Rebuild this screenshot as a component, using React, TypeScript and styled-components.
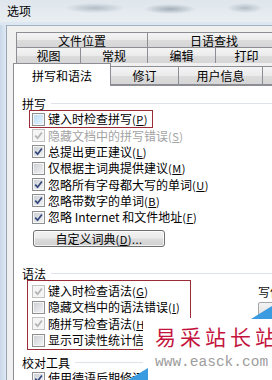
import styled, { createGlobalStyle } from 'styled-components'

const FONT = `"Noto Sans CJK SC", "Microsoft YaHei", sans-serif`

const GlobalStyle = createGlobalStyle`
  html, body {
    margin: 0;
    padding: 0;
  }
  body {
    width: 272px;
    height: 380px;
    overflow: hidden;
    background: #f0f0f0;
    font-family: ${FONT};
  }
`

type TabDef = { label: string; w: number; active?: boolean }

const backRows: TabDef[][] = [
  [
    { label: '文件位置', w: 132 },
    { label: '日语查找', w: 134 },
  ],
  [
    { label: '视图', w: 65 },
    { label: '常规', w: 68 },
    { label: '编辑', w: 69 },
    { label: '打印', w: 63 },
  ],
]

const frontRow: TabDef[] = [
  { label: '拼写和语法', w: 98, active: true },
  { label: '修订', w: 69 },
  { label: '用户信息', w: 85 },
  { label: '', w: 60 },
]

type Tone = 'normal' | 'hover' | 'disabled' | 'dim'

type Item = { text: string; key?: string; checked?: boolean; tone?: Tone; mark?: boolean }

const spelling: Item[] = [
  { text: '键入时检查拼写', key: 'P', tone: 'hover', mark: true },
  { text: '隐藏文档中的拼写错误', key: 'S', checked: true, tone: 'disabled' },
  { text: '总提出更正建议', key: 'L', checked: true },
  { text: '仅根据主词典提供建议', key: 'M' },
  { text: '忽略所有字母都大写的单词', key: 'U', checked: true },
  { text: '忽略带数字的单词', key: 'B', checked: true },
  { text: '忽略 Internet 和文件地址', key: 'F', checked: true },
]

const grammar: Item[] = [
  { text: '键入时检查语法', key: 'G', checked: true, tone: 'dim' },
  { text: '隐藏文档中的语法错误', key: 'I' },
  { text: '随拼写检查语法', key: 'H', checked: true, tone: 'dim' },
  { text: '显示可读性统计信息', key: 'R' },
]

function CheckBox({ checked, tone = 'normal' }: { checked?: boolean; tone?: Tone }) {
  const stroke = tone === 'disabled' || tone === 'dim' ? '#b4b4b4' : '#34487c'
  return (
    <Box $tone={tone}>
      {checked && (
        <svg width="9" height="9" viewBox="0 0 9 9">
          <path d="M1.2 4.6 L3.6 7.2 L7.9 1.4" fill="none" stroke={stroke} strokeWidth="1.7" />
        </svg>
      )}
    </Box>
  )
}

function CheckRow({ item }: { item: Item }) {
  return (
    <Row $mark={item.mark}>
      <CheckBox checked={item.checked} tone={item.tone} />
      <Label $disabled={item.tone === 'disabled'}>
        {item.text}
        {item.key && (
          <Key>
            (<u>{item.key}</u>)
          </Key>
        )}
      </Label>
    </Row>
  )
}

export default function App() {
  return (
    <Window>
      <GlobalStyle />
      <TitleBar>选项</TitleBar>
      <Frame>
        <FrameEdge />
        <Dialog>
          <TabStrip>
            {backRows.map((row, i) => (
              <BackRow key={i} $h={i === 0 ? 15 : 16}>
                {row.map((t) => (
                  <Tab key={t.label} style={{ width: t.w }}>
                    {t.label}
                  </Tab>
                ))}
              </BackRow>
            ))}
            <FrontRow>
              {frontRow.map((t, i) =>
                t.active ? (
                  <ActiveTab key={i} style={{ width: t.w }}>
                    {t.label}
                  </ActiveTab>
                ) : (
                  <FrontTab key={i} style={{ width: t.w }}>
                    {t.label}
                  </FrontTab>
                ),
              )}
            </FrontRow>
          </TabStrip>

          <Panel>
            <GroupTitle>拼写</GroupTitle>
            <List>
              {spelling.map((it) => (
                <CheckRow key={it.text} item={it} />
              ))}
            </List>
            <Button>
              自定义词典<Key>(<u>D</u>)...</Key>
            </Button>

            <GroupTitle $top={18}>语法</GroupTitle>
            <GrammarLine>
              <MarkBox>
                {grammar.map((it) => (
                  <CheckRow key={it.text} item={it} />
                ))}
              </MarkBox>
              <StyleCol>
                <span>写作风格</span>
                <Combo />
              </StyleCol>
            </GrammarLine>

            <GroupTitle $top={4}>校对工具</GroupTitle>
            <List>
              <CheckRow item={{ text: '使用德语后期修订规则', checked: true }} />
            </List>
          </Panel>
        </Dialog>
      </Frame>

      <Ribbon style={{ left: 250, top: 305 }} width="22" height="14" viewBox="0 0 22 14">
        <polygon points="1,14 22,1 22,14" fill="#3a9be0" />
      </Ribbon>
      <Ribbon style={{ left: 128, top: 367 }} width="20" height="13" viewBox="0 0 20 13">
        <polygon points="0,13 20,1 20,13" fill="#3a9be0" />
      </Ribbon>
      <Watermark>
        <Brand>易采站长站</Brand>
        <Url>www.easck.com</Url>
      </Watermark>
    </Window>
  )
}

const Window = styled.div`
  position: relative;
  width: 272px;
  height: 380px;
  overflow: hidden;
  display: flex;
  flex-direction: column;
  font-family: ${FONT};
  font-size: 12px;
  color: #111;
`

const TitleBar = styled.div`
  flex: none;
  height: 22px;
  line-height: 22px;
  padding-left: 7px;
  font-size: 12px;
  color: #000;
  background:
    radial-gradient(ellipse 30px 5px at 95px 8px, rgba(120, 135, 150, 0.45), transparent),
    radial-gradient(ellipse 26px 5px at 170px 9px, rgba(110, 125, 140, 0.55), transparent),
    radial-gradient(ellipse 18px 5px at 245px 8px, rgba(120, 135, 150, 0.45), transparent),
    linear-gradient(#dfe6ec, #e9eef2);
`

const Frame = styled.div`
  flex: 1;
  display: flex;
  padding-top: 3px;
  background: #dde7f1;
`

const FrameEdge = styled.div`
  flex: none;
  width: 6px;
  background: linear-gradient(90deg, #c8d7e8, #dfe9f3);
  border-right: 1px solid #97a5b5;
`

const Dialog = styled.div`
  flex: 1;
  min-width: 0;
  overflow: hidden;
  background: #f0f0f0;
  border-top: 1px solid #a4b2c2;
  padding: 6px 0 0 6px;
`

const TabStrip = styled.div`
  display: flex;
  flex-direction: column;
  width: 320px;
`

const BackRow = styled.div<{ $h: number }>`
  display: flex;
  height: ${({ $h }) => $h}px;
  padding-left: 3px;
`

const tabFace = `
  flex: none;
  box-sizing: border-box;
  border: 1px solid #8c8e94;
  border-bottom: none;
  margin-left: -1px;
  text-align: center;
  white-space: nowrap;
  color: #000;
  font-size: 12px;
  background: linear-gradient(#f4f4f4 0%, #ebebeb 50%, #dcdcdc 51%, #d6d6d6 100%);
`

const Tab = styled.div`
  ${tabFace}
  height: 100%;
  line-height: 15px;
  &:first-child {
    margin-left: 0;
  }
`

const FrontRow = styled.div`
  display: flex;
  align-items: flex-end;
  height: 22px;
  position: relative;
  z-index: 1;
`

const FrontTab = styled.div`
  ${tabFace}
  height: 19px;
  line-height: 18px;
  border-bottom: 1px solid #8c8e94;
`

const ActiveTab = styled.div`
  ${tabFace}
  margin-left: 0;
  height: 23px;
  margin-bottom: -1px;
  line-height: 24px;
  background: #fff;
`

const Panel = styled.div`
  width: 320px;
  height: 400px;
  background: #fff;
  border-top: 1px solid #8c8e94;
  border-left: 1px solid #8c8e94;
  padding: 9px 0 0 8px;
`

const GroupTitle = styled.div<{ $top?: number }>`
  display: flex;
  align-items: center;
  gap: 5px;
  height: 16px;
  margin-top: ${({ $top }) => $top ?? 0}px;
  font-size: 12px;
  color: #000;

  &::after {
    content: '';
    flex: 1;
    height: 1px;
    background: #dde3e8;
  }
`

const List = styled.div`
  display: flex;
  flex-direction: column;
  padding-left: 10px;
`

const Row = styled.div<{ $mark?: boolean }>`
  position: relative;
  display: flex;
  align-items: center;
  gap: 3px;
  height: 16.35px;
  white-space: nowrap;

  ${({ $mark }) =>
    $mark &&
    `
    &::before {
      content: '';
      position: absolute;
      left: -3px;
      top: -1px;
      width: 124px;
      height: 18px;
      box-sizing: border-box;
      border: 1px solid #9b2b36;
    }
  `}
`

const Box = styled.span<{ $tone: Tone }>`
  flex: none;
  box-sizing: border-box;
  width: 13px;
  height: 13px;
  display: grid;
  place-items: center;
  border: 1px solid ${({ $tone }) => ($tone === 'disabled' || $tone === 'dim' ? '#c2c2c2' : '#8e8f8f')};
  box-shadow: inset 0 0 0 1px #f6f6f6;
  background: ${({ $tone }) =>
    $tone === 'hover'
      ? 'linear-gradient(135deg, #b9dcf6, #e6f4fd)'
      : $tone === 'disabled' || $tone === 'dim'
        ? '#f4f4f4'
        : 'linear-gradient(135deg, #c9cdd3, #f5f5f6)'};
`

const Label = styled.span<{ $disabled?: boolean }>`
  font-size: 12px;
  line-height: 14px;
  color: ${({ $disabled }) => ($disabled ? '#a3a3a3' : '#000')};
`

const Key = styled.span`
  font-size: 11px;
  letter-spacing: 0.5px;
`

const Button = styled.div`
  box-sizing: border-box;
  width: 132px;
  height: 17px;
  margin: 5px 0 0 11px;
  border: 1px solid #707070;
  border-radius: 3px;
  text-align: center;
  line-height: 15px;
  font-size: 12px;
  color: #000;
  background: linear-gradient(#f2f2f2 0%, #ebebeb 48%, #dddddd 52%, #cfcfcf 100%);
  box-shadow: inset 0 0 0 1px rgba(255, 255, 255, 0.7);
`

const GrammarLine = styled.div`
  display: flex;
  align-items: flex-start;
  margin-top: -1.5px;
`

const MarkBox = styled.div`
  flex: none;
  box-sizing: border-box;
  width: 164px;
  margin-left: 5px;
  padding: 2px 0 1px 4px;
  border: 1px solid #9b2b36;
  display: flex;
  flex-direction: column;
`

const StyleCol = styled.div`
  display: flex;
  flex-direction: column;
  gap: 3px;
  margin: 5px 0 0 67px;
  white-space: nowrap;
  font-size: 12px;
  line-height: 14px;
`

const Combo = styled.div`
  width: 120px;
  height: 16px;
  border: 1px solid #a7a7a7;
  border-radius: 2px;
  background: linear-gradient(#f3f3f3, #dedede);
`

const Ribbon = styled.svg`
  position: absolute;
  z-index: 3;
`

const Watermark = styled.div`
  position: absolute;
  z-index: 2;
  left: 143px;
  top: 318px;
  right: 0;
  bottom: 0;
  background: #fff;
  padding: 5px 0 0 12px;
  white-space: nowrap;
`

const Brand = styled.div`
  font-family: ${FONT};
  font-size: 21px;
  line-height: 26px;
  letter-spacing: 4px;
  color: #c4143e;
`

const Url = styled.div`
  margin-top: 5px;
  font-family: "Liberation Mono", "DejaVu Sans Mono", monospace;
  font-size: 14.5px;
  line-height: 16px;
  color: #9d9d9d;
`
